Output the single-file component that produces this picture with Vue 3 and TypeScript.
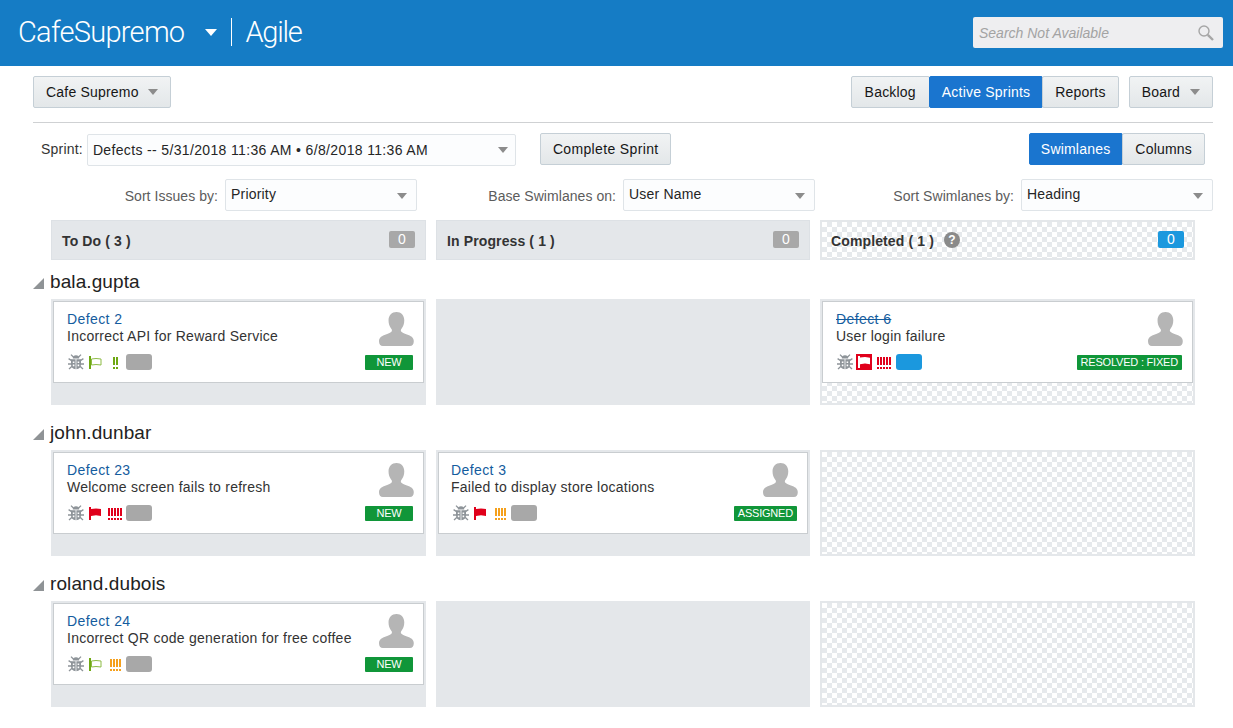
<script setup lang="ts">
interface Card {
  title: string
  desc: string
  status: string
  flag: 'green' | 'red' | 'boxed'
  bars: number
  color: string
  badge: string
  done?: boolean
}
interface Lane {
  name: string
  cells: (Card | null)[]
}
const lanes: Lane[] = [
  {
    name: 'bala.gupta',
    cells: [
      { title: 'Defect 2', desc: 'Incorrect API for Reward Service', status: 'NEW', flag: 'green', bars: 2, color: '#6fa813', badge: '#a8a8a8' },
      null,
      { title: 'Defect 6', desc: 'User login failure', status: 'RESOLVED : FIXED', flag: 'boxed', bars: 5, color: '#e0001b', badge: '#1b98de', done: true },
    ],
  },
  {
    name: 'john.dunbar',
    cells: [
      { title: 'Defect 23', desc: 'Welcome screen fails to refresh', status: 'NEW', flag: 'red', bars: 5, color: '#e0001b', badge: '#a8a8a8' },
      { title: 'Defect 3', desc: 'Failed to display store locations', status: 'ASSIGNED', flag: 'red', bars: 4, color: '#f5a01c', badge: '#a8a8a8' },
      null,
    ],
  },
  {
    name: 'roland.dubois',
    cells: [
      { title: 'Defect 24', desc: 'Incorrect QR code generation for free coffee', status: 'NEW', flag: 'green', bars: 4, color: '#f5a01c', badge: '#a8a8a8' },
      null,
      null,
    ],
  },
]
const heads = [
  { label: 'To Do ( 3 )', done: false },
  { label: 'In Progress ( 1 )', done: false },
  { label: 'Completed ( 1 )', done: true },
]
</script>

<template>
  <div class="page">
    <header class="top">
      <span class="brand">CafeSupremo</span>
      <span class="brand-caret"></span>
      <span class="brand-div"></span>
      <span class="brand agile">Agile</span>
      <div class="search">
        <span>Search Not Available</span>
        <svg width="18" height="18" viewBox="0 0 18 18" fill="none" stroke="#a6a6a6">
          <circle cx="7" cy="7" r="5" stroke-width="1.4" />
          <path d="M10.8 10.800 16 16" stroke-width="2.4" />
        </svg>
      </div>
    </header>

    <main class="main">
      <div class="bar1">
        <button class="btn">Cafe Supremo<i class="caret"></i></button>
        <div class="bar-right">
          <div class="seg nav">
            <button class="btn">Backlog</button>
            <button class="btn on">Active Sprints</button>
            <button class="btn">Reports</button>
          </div>
          <button class="btn">Board<i class="caret"></i></button>
        </div>
      </div>

      <div class="bar2">
        <label class="lbl dark">Sprint:</label>
        <div class="sel sprint">Defects -- 5/31/2018 11:36 AM • 6/8/2018 11:36 AM<i class="caret"></i></div>
        <button class="btn complete">Complete Sprint</button>
        <div class="seg views">
          <button class="btn on">Swimlanes</button>
          <button class="btn">Columns</button>
        </div>
      </div>

      <div class="bar3">
        <div class="field"><label class="lbl">Sort Issues by:</label><div class="sel wide">Priority<i class="caret"></i></div></div>
        <div class="field"><label class="lbl">Base Swimlanes on:</label><div class="sel wide">User Name<i class="caret"></i></div></div>
        <div class="field"><label class="lbl">Sort Swimlanes by:</label><div class="sel wide">Heading<i class="caret"></i></div></div>
      </div>

      <div class="cols heads">
        <div v-for="h in heads" :key="h.label" class="head" :class="{ check: h.done }">
          <span class="head-t">{{ h.label }}</span>
          <span v-if="h.done" class="help">?</span>
          <span class="count" :class="{ blue: h.done }">0</span>
        </div>
      </div>

      <section v-for="lane in lanes" :key="lane.name" class="lane">
        <h2 class="lane-name"><i class="tri"></i>{{ lane.name }}</h2>
        <div class="cols">
          <div
            v-for="(c, i) in lane.cells"
            :key="i"
            class="cell"
            :class="{ check: i === 2 }"
          >
            <article v-if="c" class="card">
              <div class="card-l">
                <a class="title" :class="{ done: c.done }">{{ c.title }}</a>
                <p class="desc">{{ c.desc }}</p>
                <div class="icons">
                  <svg class="bug" width="16" height="16" viewBox="0 0 16 16" fill="#8e9499">
                    <path d="M4.800 4.400a3.200 3.200 0 0 1 6.400 0z" />
                    <path d="M3 5.200h4.600v10c-2.800-.2-4.600-2-4.600-4.600zM8.400 5.200H13v5.400c0 2.600-1.800 4.400-4.600 4.600z" />
                    <path d="M3 .6 5.600 3.200M13 .6 10.400 3.200M.6 4.600l3 2M15.400 4.600l-3 2M0 10h3.600M16 10h-3.600M1 15l3-2.800M15 15l-3-2.800" stroke="#8e9499" stroke-width="1.3" fill="none" />
                    <path d="M4.800 7.400h1.600v1.600H4.800zM9.600 7.400h1.600v1.600H9.600zM4.800 10.600h1.600v1.600H4.800zM9.600 10.600h1.600v1.600H9.600z" fill="#fff" />
                  </svg>
                  <span class="flag-slot">
                    <svg v-if="c.flag === 'green'" width="16" height="16" viewBox="0 0 16 16">
                      <rect x="1" y="2" width="2" height="13" fill="#6fa813" />
                      <path d="M3.500 5 8 4.500l5 .5v6l-5-.5-4.500.5z" fill="#fff" stroke="#8dbb45" />
                    </svg>
                    <svg v-else-if="c.flag === 'red'" width="16" height="16" viewBox="0 0 16 16">
                      <rect x="1" y="2" width="2" height="13" fill="#e0001b" />
                      <path d="M3 4 8 3.500l5 .5v7l-5-.7-5 .7z" fill="#e0001b" />
                    </svg>
                    <svg v-else width="16" height="16" viewBox="0 0 16 16">
                      <rect width="16" height="16" fill="#e0001b" />
                      <rect x="2" y="2" width="2" height="12" fill="#fff" />
                      <path d="M4 3.500 9 3l5 .8v6.400l-5-.7-5 .8z" fill="#fff" />
                    </svg>
                  </span>
                  <span class="pri">
                    <span v-for="n in c.bars" :key="n" class="pbar" :style="{ color: c.color }"></span>
                  </span>
                  <span class="chip" :style="{ background: c.badge }"></span>
                </div>
              </div>
              <div class="card-r">
                <svg class="avatar" width="35" height="34" viewBox="0 0 36 35" fill="#b5b5b5">
                  <path d="M18 0c4.800 0 8 3.500 8 8.500 0 3.400-1 6.600-3 9-.6.800-.7 1.800-.2 2.500.9 1.200 3 2 6 3.100 3.800 1.400 7 2.800 7 6.900 0 3.200-1.400 5-4 5H4c-2.600 0-4-1.800-4-5 0-4.100 3.200-5.500 7-6.900 3-1.100 5.100-1.900 6-3.100.5-.7.400-1.700-.2-2.500-2-2.400-3-5.600-3-9C9.800 3.500 13.200 0 18 0z" />
                </svg>
                <span class="status">{{ c.status }}</span>
              </div>
            </article>
          </div>
        </div>
      </section>
    </main>
  </div>
</template>

<style scoped>
.page {
  width: 1233px;
  height: 728px;
  overflow: hidden;
  background: #fff;
  color: #252525;
  font-family: "Liberation Sans", Arial, sans-serif;
  font-size: 14px;
  letter-spacing: 0.2px;
}
.top {
  height: 66px;
  box-sizing: border-box;
  background: #157cc5;
  display: flex;
  align-items: center;
  padding: 0 10px 2px 18px;
  color: #fff;
}
.brand {
  font-family: Roboto, sans-serif;
  font-weight: 300;
  font-size: 29px;
  letter-spacing: -0.72px;
}
.agile {
  letter-spacing: -1.2px;
}
.brand-caret {
  width: 0;
  height: 0;
  border-left: 6px solid transparent;
  border-right: 6px solid transparent;
  border-top: 7px solid #fff;
  margin: 0 14px 0 21px;
}
.brand-div {
  width: 1px;
  height: 28px;
  background: #fff;
  margin-right: 13px;
}
.search {
  margin-left: auto;
  width: 250px;
  height: 31px;
  box-sizing: border-box;
  margin-top: 1px;
  background: #eeeef0;
  border-radius: 2px;
  display: flex;
  align-items: center;
  justify-content: space-between;
  padding: 0 8px 0 6px;
  color: #a3a3a3;
  font-style: italic;
  letter-spacing: 0;
}
.main {
  padding: 10px 20px 0 33px;
}
.bar1 {
  display: flex;
  justify-content: space-between;
  padding-bottom: 14px;
  border-bottom: 1px solid #cfd1d3;
}
.bar1 > .btn .caret {
  margin-left: 9px;
}
.bar-right {
  display: flex;
  gap: 10px;
}
.btn {
  height: 32px;
  box-sizing: border-box;
  padding: 0 12px;
  font: inherit;
  letter-spacing: inherit;
  color: #161616;
  background: linear-gradient(#f1f3f4, #e3e7e9);
  border: 1px solid #c5cfd6;
  border-radius: 2px;
  display: inline-flex;
  align-items: center;
}
.btn.on {
  background: #1a75cf;
  border-color: #1a75cf;
  color: #fff;
}
.seg {
  display: flex;
}
.seg .btn + .btn {
  margin-left: -1px;
}
.nav .btn:first-child {
  padding: 0 13px;
}
.views .btn:first-child {
  padding-left: 11px;
}
.caret {
  display: inline-block;
  width: 0;
  height: 0;
  border-left: 5px solid transparent;
  border-right: 5px solid transparent;
  border-top: 6px solid #8c8c8c;
  margin-left: 10px;
}
.bar2 {
  display: flex;
  align-items: center;
  height: 32px;
  margin-top: 10px;
  padding-left: 8px;
}
.lbl {
  color: #5c5c5c;
  margin-right: 7px;
  margin-top: 2px;
  letter-spacing: 0.05px;
}
.lbl.dark {
  color: #333;
  margin-right: 4px;
  margin-top: 0;
  letter-spacing: 0.2px;
}
.sel {
  box-sizing: border-box;
  height: 32px;
  background: #fcfdfe;
  border: 1px solid #dfe4e8;
  border-radius: 2px;
  padding: 0 5px;
  display: flex;
  align-items: center;
  justify-content: space-between;
  color: #252525;
}
.sprint {
  width: 429px;
  margin-top: 1px;
  letter-spacing: 0.35px;
}
.sprint .caret {
  margin-right: 2px;
}
.complete {
  margin-left: 24px;
  padding-right: 11px;
  letter-spacing: 0.35px;
}
.views {
  margin-left: auto;
  margin-right: 8px;
}
.bar3 {
  display: flex;
  justify-content: flex-end;
  gap: 0;
  margin-top: 14px;
}
.field {
  display: flex;
  align-items: center;
  justify-content: flex-end;
  width: 398px;
}
.field:first-child {
  width: 384px;
}
.wide {
  width: 192px;
  padding-bottom: 2px;
}
.wide .caret {
  margin-top: 3px;
  margin-right: 4px;
}
.cols {
  display: grid;
  grid-template-columns: 375px 374px 375px;
  column-gap: 10px;
  margin-left: 18px;
}
.heads {
  margin-top: 9px;
}
.check {
  background-color: #fff;
  background-image: repeating-conic-gradient(#e6e9ec 0 25%, #fff 0 50%);
  background-size: 10px 10px;
}
.head {
  box-sizing: border-box;
  height: 40px;
  display: flex;
  align-items: center;
  padding: 2px 10px 0;
  background-color: #e4e7ea;
  border: 1px solid #dde1e5;
  font-weight: 700;
  color: #333;
  letter-spacing: 0.12px;
}
.head.check {
  background-color: #fff;
  border: 2px solid #e4e7ea;
  padding: 1px 9px 0;
}
.help {
  width: 16px;
  height: 16px;
  border-radius: 50%;
  background: #8a8a8a;
  color: #fff;
  font-size: 12px;
  line-height: 16px;
  text-align: center;
  margin-left: 10px;
  letter-spacing: 0;
  margin-top: -2px;
}
.count {
  margin-left: auto;
  width: 26px;
  height: 17px;
  line-height: 17px;
  border-radius: 2px;
  background: #a8a8a8;
  color: #fff;
  font-weight: 400;
  font-size: 14px;
  text-align: center;
  margin-top: -3px;
}
.count.blue {
  background: #1b98de;
}
.lane-name {
  margin: 0;
  height: 39px;
  display: flex;
  align-items: center;
  font-weight: 400;
  font-size: 19px;
  letter-spacing: 0.1px;
  color: #222;
  padding-top: 5px;
  box-sizing: border-box;
}
.lane {
  margin-bottom: 6px;
}
.tri {
  width: 0;
  height: 0;
  border-left: 11px solid transparent;
  border-bottom: 11px solid #8f9396;
  margin: 3px 6px 0 0;
}
.cell {
  height: 106px;
  box-sizing: border-box;
  background-color: #e4e7ea;
  padding: 2px;
}
.cell.check {
  background-color: #fff;
  border: 2px solid #e4e7ea;
  padding: 0;
}
.card {
  box-sizing: border-box;
  height: 82px;
  background: #fff;
  border: 1px solid #c9cdd0;
  display: flex;
  justify-content: space-between;
  padding: 9px 10px 0 13px;
}
.card-l {
  display: flex;
  flex-direction: column;
}
.title {
  color: #145c9e;
  line-height: 17px;
  letter-spacing: 0.4px;
}
.title.done {
  text-decoration: line-through;
}
.cell:nth-child(2) .title,
.cell:nth-child(2) .desc {
  margin-left: -1px;
}
.desc {
  margin: 0;
  line-height: 17px;
  color: #333;
  letter-spacing: 0.25px;
}
.icons {
  display: flex;
  align-items: center;
  height: 16px;
  margin-top: 9px;
}
.bug {
  margin-left: 1px;
  margin-right: 4px;
}
.check .bug {
  margin-right: 3px;
}
.flag-slot {
  width: 16px;
  height: 16px;
  display: block;
}
.pri {
  width: 22px;
  height: 12px;
  margin-top: 2px;
  display: flex;
  justify-content: center;
  gap: 1px;
}
.check .pri {
  width: 24px;
}
.pbar {
  width: 2px;
  height: 12px;
  background: linear-gradient(currentColor 0 8px, transparent 8px 10px, currentColor 10px);
}
.chip {
  width: 26px;
  height: 16px;
  border-radius: 3px;
}
.card-r {
  display: flex;
  flex-direction: column;
  align-items: flex-end;
}
.avatar {
  margin-right: -1px;
  margin-top: 1px;
}
.status {
  margin-top: 9px;
  height: 15px;
  line-height: 15px;
  background: #109639;
  color: #fff;
  font-size: 11px;
  letter-spacing: -0.2px;
  padding: 0 4px;
  border-radius: 1px;
  min-width: 48px;
  box-sizing: border-box;
  text-align: center;
}
</style>

<style>
html, body { margin: 0; padding: 0; background: #fff; }
</style>
